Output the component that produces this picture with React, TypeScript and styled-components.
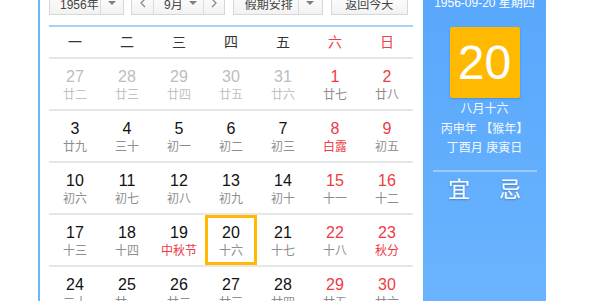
import React from "react";
import styled, { createGlobalStyle } from "styled-components";

const Global = createGlobalStyle`
  html, body { margin: 0; padding: 0; background: #fff; overflow: hidden; }
  body { font-family: "Liberation Sans", "Noto Sans CJK SC", Arial, sans-serif; }
`;

const FONT = `"Liberation Sans", "Noto Sans CJK SC", Arial, sans-serif`;

const Calendar = styled.div`
  display: flex;
  margin: -20px 0 0 38px;
  width: 508px;
  border-left: 2px solid #6cb4fd;
  font-family: ${FONT};
`;

const Main = styled.div`
  width: 383px;
  box-sizing: border-box;
  padding: 11px 10px 0 9px;
`;

const Toolbar = styled.div`
  display: flex;
  align-items: center;
  width: 364px;
  padding-bottom: 10px;
  border-bottom: 2px solid #a9d0f9;
`;

const Select = styled.div<{ $w: number; $gap?: number }>`
  display: flex;
  align-items: stretch;
  width: ${(p) => p.$w}px;
  height: 24px;
  margin-left: ${(p) => p.$gap ?? 0}px;
  box-sizing: border-box;
  border: 1px solid #d6d6d6;
  background: linear-gradient(#ffffff, #f2f2f2);
  font-size: 12px;
  color: #444;
`;

const SelectLabel = styled.div<{ $pad: number }>`
  flex: 1;
  display: flex;
  align-items: center;
  padding-left: ${(p) => p.$pad}px;
  white-space: nowrap;
`;

const Arrow = styled.div<{ $w: number; $divided?: boolean }>`
  width: ${(p) => p.$w}px;
  display: flex;
  align-items: center;
  justify-content: center;
  border-left: ${(p) => (p.$divided ? "1px solid #dcdcdc" : "none")};
  &::after {
    content: "";
    border-left: 4px solid transparent;
    border-right: 4px solid transparent;
    border-top: 4px solid #808080;
  }
`;

const Group = styled.div<{ $gap: number }>`
  display: flex;
  height: 24px;
  margin-left: ${(p) => p.$gap}px;
  box-sizing: border-box;
  border: 1px solid #d6d6d6;
  background: linear-gradient(#ffffff, #f2f2f2);
  font-size: 12px;
  color: #444;
`;

const Step = styled.div<{ $w: number; $side: "l" | "r" }>`
  width: ${(p) => p.$w}px;
  display: flex;
  align-items: center;
  justify-content: center;
  ${(p) => (p.$side === "l" ? "border-right: 1px solid #dcdcdc;" : "border-left: 1px solid #dcdcdc;")}
`;

const GroupSelect = styled.div`
  flex: 1;
  display: flex;
  align-items: stretch;
`;

const TodayButton = styled.div<{ $gap: number }>`
  width: 77px;
  height: 24px;
  margin-left: ${(p) => p.$gap}px;
  box-sizing: border-box;
  border: 1px solid #d6d6d6;
  background: linear-gradient(#ffffff, #f2f2f2);
  display: flex;
  align-items: center;
  justify-content: center;
  font-size: 12px;
  color: #444;
`;

const WeekHeader = styled.div`
  display: grid;
  grid-template-columns: repeat(7, 52px);
  height: 30px;
`;

const WeekDay = styled.div<{ $red?: boolean }>`
  text-align: center;
  line-height: 30px;
  font-size: 14px;
  color: ${(p) => (p.$red ? "#f0404a" : "#333")};
`;

const Row = styled.div`
  display: grid;
  grid-template-columns: repeat(7, 52px);
  border-top: 2px solid #e6e6e6;
`;

const Cell = styled.div<{ $selected?: boolean }>`
  height: 50px;
  box-sizing: border-box;
  padding-top: 8px;
  text-align: center;
  box-shadow: ${(p) => (p.$selected ? "inset 0 0 0 3px #ffb900" : "none")};
`;

const DayNum = styled.div<{ $tone: "norm" | "red" | "other" }>`
  font-size: 16px;
  line-height: 20px;
  color: ${(p) => (p.$tone === "red" ? "#ee3a45" : p.$tone === "other" ? "#bdbdbd" : "#111")};
`;

const Lunar = styled.div<{ $tone: "norm" | "red" | "other" }>`
  font-size: 12px;
  line-height: 16px;
  color: ${(p) => (p.$tone === "red" ? "#ee3a45" : p.$tone === "other" ? "#c2c2c2" : "#8e8e8e")};
`;

const Side = styled.div`
  width: 123px;
  min-height: 420px;
  padding-top: 14px;
  box-sizing: border-box;
  background: linear-gradient(#57a7fc, #70b7ff);
  color: #fff;
  display: flex;
  flex-direction: column;
  align-items: center;
`;

const SideTitle = styled.div`
  font-size: 12px;
  line-height: 18px;
  white-space: nowrap;
`;

const BigDay = styled.div`
  margin-top: 15px;
  width: 70px;
  height: 71px;
  border-radius: 2px;
  background: #ffb900;
  box-shadow: 0 1px 2px rgba(0, 60, 140, 0.25);
  display: flex;
  align-items: center;
  justify-content: center;
  font-size: 48px;
  color: #fff;
`;

const SideLines = styled.div`
  margin-top: 2px;
  font-size: 12px;
  line-height: 19.5px;
  text-align: center;
  color: rgba(255, 255, 255, 0.95);
  white-space: nowrap;
`;

const Divider = styled.div`
  margin-top: 11px;
  width: 104px;
  height: 2px;
  background: rgba(255, 255, 255, 0.35);
`;

const YiJi = styled.div`
  margin-top: 3px;
  display: flex;
  gap: 29px;
  font-size: 22px;
  line-height: 30px;
  text-shadow: 0 1px 2px rgba(0, 40, 110, 0.35);
`;

const Chevron = ({ dir }: { dir: "l" | "r" }) => (
  <svg width="6" height="10" viewBox="0 0 6 10">
    <path
      d={dir === "l" ? "M5 1 L1 5 L5 9" : "M1 1 L5 5 L1 9"}
      fill="none"
      stroke="#8a8a8a"
      strokeWidth="1.3"
    />
  </svg>
);

type Tone = "norm" | "red" | "other";
type Day = { n: number; l: string; nt: Tone; lt: Tone; sel?: boolean };

const o = (n: number, l: string): Day => ({ n, l, nt: "other", lt: "other" });
const d = (n: number, l: string): Day => ({ n, l, nt: "norm", lt: "norm" });
const w = (n: number, l: string): Day => ({ n, l, nt: "red", lt: "norm" });
const f = (n: number, l: string, wk = false): Day => ({ n, l, nt: wk ? "red" : "norm", lt: "red" });

const weeks: Day[][] = [
  [o(27, "廿二"), o(28, "廿三"), o(29, "廿四"), o(30, "廿五"), o(31, "廿六"), w(1, "廿七"), w(2, "廿八")],
  [d(3, "廿九"), d(4, "三十"), d(5, "初一"), d(6, "初二"), d(7, "初三"), f(8, "白露", true), w(9, "初五")],
  [d(10, "初六"), d(11, "初七"), d(12, "初八"), d(13, "初九"), d(14, "初十"), w(15, "十一"), w(16, "十二")],
  [d(17, "十三"), d(18, "十四"), f(19, "中秋节"), { ...d(20, "十六"), sel: true }, d(21, "十七"), w(22, "十八"), f(23, "秋分", true)],
  [d(24, "二十"), d(25, "廿一"), d(26, "廿二"), d(27, "廿三"), d(28, "廿四"), w(29, "廿五"), w(30, "廿六")],
];

const weekNames = ["一", "二", "三", "四", "五", "六", "日"];

export default function App() {
  return (
    <>
      <Global />
      <Calendar>
        <Main>
          <Toolbar>
            <Select $w={75}>
              <SelectLabel $pad={10}>1956年</SelectLabel>
              <Arrow $w={22} $divided />
            </Select>
            <Group $gap={7}>
              <Step $w={21} $side="l">
                <Chevron dir="l" />
              </Step>
              <GroupSelect>
                <SelectLabel $pad={10}>9月</SelectLabel>
                <Arrow $w={20} />
              </GroupSelect>
              <Step $w={20} $side="r">
                <Chevron dir="r" />
              </Step>
            </Group>
            <Select $w={90} $gap={8}>
              <SelectLabel $pad={11}>假期安排</SelectLabel>
              <Arrow $w={23} $divided />
            </Select>
            <TodayButton $gap={8}>返回今天</TodayButton>
          </Toolbar>
          <WeekHeader>
            {weekNames.map((n, i) => (
              <WeekDay key={n} $red={i >= 5}>
                {n}
              </WeekDay>
            ))}
          </WeekHeader>
          {weeks.map((row, ri) => (
            <Row key={ri}>
              {row.map((c, ci) => (
                <Cell key={ci} $selected={c.sel}>
                  <DayNum $tone={c.nt}>{c.n}</DayNum>
                  <Lunar $tone={c.lt}>{c.l}</Lunar>
                </Cell>
              ))}
            </Row>
          ))}
        </Main>
        <Side>
          <SideTitle>1956-09-20 星期四</SideTitle>
          <BigDay>20</BigDay>
          <SideLines>
            <div>八月十六</div>
            <div>丙申年 【猴年】</div>
            <div>丁酉月 庚寅日</div>
          </SideLines>
          <Divider />
          <YiJi>
            <span>宜</span>
            <span>忌</span>
          </YiJi>
        </Side>
      </Calendar>
    </>
  );
}
